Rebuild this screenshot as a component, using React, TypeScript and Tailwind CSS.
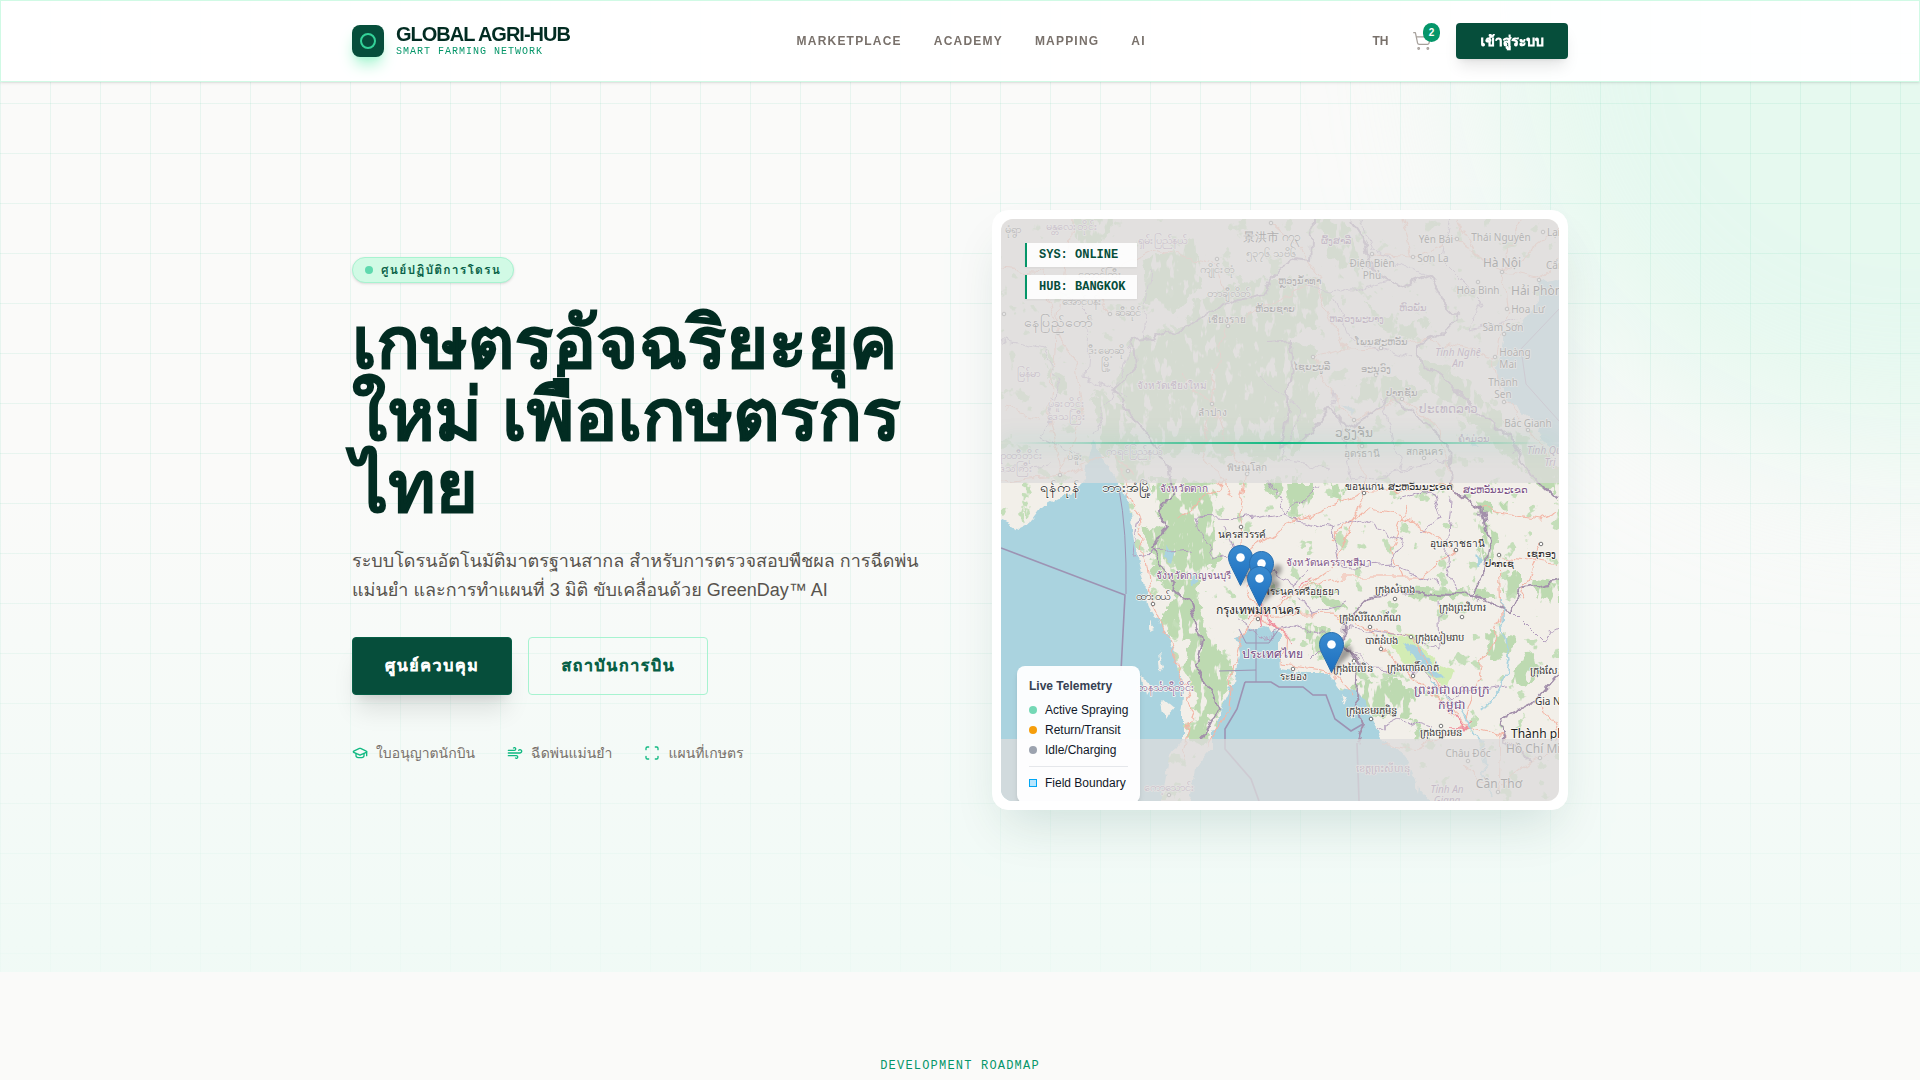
import { GraduationCap, Scan, ShoppingCart, Wind } from "lucide-react";

type Label = {
  x: number;
  y: number;
  t: string;
  kind?: "region" | "country" | "city" | "italic";
  start?: boolean;
};

const labels: Label[] = [
  { x: 12, y: 9, t: "မုံရွာ" },
  { x: 71, y: 6, t: "မန္တလေးတိုင်း", kind: "region" },
  { x: 162, y: 20, t: "ရှမ်းပြည်နယ်", kind: "region" },
  { x: 271, y: 17, t: "景洪市 ဂ၇၃", kind: "city" },
  { x: 270, y: 33, t: "၅၃၇၆ သဗိ၆" },
  { x: 216, y: 49, t: "ကျိုင်းတုံ" },
  { x: 228, y: 73, t: "တာချီလိတ်" },
  { x: 274, y: 89, t: "ຫ້ວຍຊາຍ" },
  { x: 226, y: 100, t: "เชียงราย" },
  { x: 57, y: 102, t: "နေပြည်တော်", kind: "city" },
  { x: 127, y: 92, t: "ဆီဆိုင်" },
  { x: 99, y: 54, t: "တောင်ကြီး" },
  { x: 81, y: 81, t: "အောင်ပန်း" },
  { x: 105, y: 130, t: "ဒီးမော့ဆို" },
  { x: 105, y: 143, t: "မြို့" },
  { x: 27, y: 153, t: "မြန်မာ", kind: "region" },
  { x: 171, y: 166, t: "จังหวัดเชียงใหม่", kind: "region" },
  { x: 65, y: 183, t: "ပဲခူးတိုင်း", kind: "region" },
  { x: 65, y: 196, t: "ဒေသကြီး", kind: "region" },
  { x: 211, y: 193, t: "ลำปาง" },
  { x: 133, y: 231, t: "ကရင်ပြည်နယ်", kind: "region" },
  { x: 15, y: 235, t: "ဧရာဝတီတိုင်း", kind: "region" },
  { x: 12, y: 248, t: "ဒေသကြီး", kind: "region" },
  { x: 74, y: 236, t: "ပဲခူး" },
  { x: 246, y: 248, t: "พิษณุโลก" },
  { x: 59, y: 267, t: "ရန်ကုန်", kind: "city" },
  { x: 126, y: 267, t: "ဘားအံမြို့", kind: "city" },
  { x: 183, y: 269, t: "จังหวัดตาก", kind: "region" },
  { x: 335, y: 21, t: "ຜົ້ງສາລີ", kind: "region" },
  { x: 435, y: 20, t: "Yên Bái" },
  { x: 500, y: 18, t: "Thái Nguyên" },
  { x: 546, y: 13, t: "Lạng", start: true },
  { x: 371, y: 44, t: "Điện Biên" },
  { x: 371, y: 56, t: "Phủ" },
  { x: 432, y: 39, t: "Sơn La" },
  { x: 501, y: 43, t: "Hà Nội", kind: "city" },
  { x: 545, y: 46, t: "Cẩm", start: true },
  { x: 477, y: 71, t: "Hòa Bình" },
  { x: 510, y: 71, t: "Hải Phòng", kind: "city", start: true },
  { x: 527, y: 90, t: "Hoa Lư" },
  { x: 502, y: 108, t: "Sầm Sơn" },
  { x: 514, y: 133, t: "Hoàng" },
  { x: 507, y: 145, t: "Mai" },
  { x: 457, y: 133, t: "Tỉnh Nghệ", kind: "italic" },
  { x: 457, y: 144, t: "An", kind: "italic" },
  { x: 502, y: 163, t: "Thành" },
  { x: 502, y: 175, t: "Sen" },
  { x: 527, y: 204, t: "Bắc Gianh" },
  { x: 526, y: 231, t: "Tỉnh Quảng", kind: "italic", start: true },
  { x: 549, y: 243, t: "Trị", kind: "italic" },
  { x: 298, y: 61, t: "ຫຼວງນ້ຳທາ" },
  { x: 355, y: 99, t: "ຫລວງພະບາງ", kind: "region" },
  { x: 412, y: 88, t: "ຫົວພັນ", kind: "region" },
  { x: 380, y: 122, t: "ໂພນສະຫວັນ" },
  { x: 311, y: 147, t: "ໄຊຍະບູລີ" },
  { x: 375, y: 149, t: "ອະນຸວົງ" },
  { x: 401, y: 173, t: "ປາກຊັນ" },
  { x: 447, y: 189, t: "ປະເທດລາວ", kind: "country" },
  { x: 353, y: 213, t: "ວຽງຈັນ", kind: "city" },
  { x: 473, y: 219, t: "ຄຳມ່ວນ", kind: "region" },
  { x: 361, y: 234, t: "อุดรธานี" },
  { x: 423, y: 232, t: "สกลนคร" },
  { x: 363, y: 267, t: "ขอนแก่น" },
  { x: 419, y: 267, t: "ສະຫວັນນະເຂດ" },
  { x: 494, y: 270, t: "ສະຫວັນນະເຂດ", kind: "region" },
  { x: 456, y: 324, t: "อุบลราชธานี" },
  { x: 540, y: 334, t: "ເຊກອງ" },
  { x: 498, y: 344, t: "ປາກເຊ" },
  { x: 328, y: 343, t: "จังหวัดนครราชสีมา", kind: "region" },
  { x: 300, y: 372, t: "พระนครศรีอยุธยา" },
  { x: 394, y: 370, t: "ក្រុងសំរោង" },
  { x: 461, y: 388, t: "ក្រុងព្រះវិហារ" },
  { x: 369, y: 398, t: "ក្រុងសិរីសោភ័ណ" },
  { x: 380, y: 421, t: "បាត់ដំបង" },
  { x: 438, y: 418, t: "ក្រុងសៀមរាប" },
  { x: 352, y: 449, t: "ក្រុងប៉ៃលិន" },
  { x: 412, y: 448, t: "ក្រុងពោធិ៍សាត់" },
  { x: 529, y: 451, t: "ក្រុងសែនមនោរម្យ", start: true },
  { x: 451, y: 470, t: "ព្រះរាជាណាចក្រ", kind: "country" },
  { x: 451, y: 485, t: "កម្ពុជា", kind: "country" },
  { x: 534, y: 482, t: "Gia Nghĩa", start: true },
  { x: 370, y: 491, t: "ក្រុងខេមរភូមិន្ទ" },
  { x: 510, y: 514, t: "Thành phố", kind: "city", start: true },
  { x: 505, y: 529, t: "Hồ Chí Minh", kind: "city", start: true },
  { x: 440, y: 513, t: "ក្រុងច្បារមន" },
  { x: 467, y: 534, t: "Châu Đốc" },
  { x: 382, y: 549, t: "ខេត្តព្រះសីហនុ", kind: "region" },
  { x: 498, y: 564, t: "Cần Thơ", kind: "city" },
  { x: 446, y: 570, t: "Tỉnh An", kind: "italic" },
  { x: 446, y: 581, t: "Giang", kind: "italic" },
  { x: 292, y: 457, t: "ระยอง" },
  { x: 241, y: 315, t: "นครสวรรค์" },
  { x: 192, y: 356, t: "จังหวัดกาญจนบุรี", kind: "region" },
  { x: 152, y: 376, t: "ထားဝယ်" },
  { x: 257, y: 390, t: "กรุงเทพมหานคร", kind: "city" },
  { x: 271, y: 434, t: "ประเทศไทย", kind: "country" },
  { x: 165, y: 467, t: "တနင်္သာရီတိုင်း", kind: "region" },
  { x: 168, y: 567, t: "ကော့သောင်း", kind: "region" },
];

const towns: [number, number][] = [
  [3, 95], [57, 114], [109, 95], [216, 40], [227, 107], [211, 185], [59, 256], [127, 252],
  [246, 255], [240, 308], [152, 385], [270, 4], [371, 35], [456, 20], [542, 13], [412, 38],
  [501, 53], [477, 63], [538, 61], [506, 90], [503, 115], [494, 138], [503, 183], [527, 211],
  [380, 129], [312, 138], [375, 156], [401, 180], [353, 201], [361, 227], [423, 239],
  [363, 274], [450, 267], [455, 331], [498, 336], [540, 325], [394, 380], [461, 398],
  [369, 408], [380, 430], [410, 418], [353, 442], [412, 457], [370, 500], [440, 507],
  [292, 450], [257, 400], [467, 542], [497, 573], [539, 539], [168, 576],
];

const pins: [number, number][] = [
  [227, 326],
  [248, 332],
  [246, 347],
  [318, 413],
];

const labelStyle = {
  town: "fill-[#333333] text-[10px]",
  region: "fill-[#7d5488] text-[10px]",
  country: "fill-[#724a82] text-[12px]",
  city: "fill-[#222222] text-[12px]",
  italic: "fill-[#7d5488] text-[10px] italic",
};

const burmeseStyle = {
  town: "fill-[#333333] text-[11px]",
  region: "fill-[#7d5488] text-[11px]",
  country: "fill-[#724a82] text-[14px]",
  city: "fill-[#222222] text-[14px]",
  italic: "fill-[#7d5488] text-[11px] italic",
};

const isBurmese = (t: string) => /^[\u1000-\u109f]/.test(t);

function RegionMap() {
  return (
    <svg
      viewBox="0 0 558 582"
      preserveAspectRatio="xMidYMid slice"
      className="block h-full w-full font-['Noto_Sans',sans-serif]"
      role="img"
      aria-label="Map of mainland Southeast Asia"
    >
      <defs>
        <filter id="coast" x="-5%" y="-5%" width="110%" height="110%">
          <feTurbulence type="fractalNoise" baseFrequency="0.09" numOctaves="3" seed="4" />
          <feDisplacementMap in="SourceGraphic" scale="9" xChannelSelector="R" yChannelSelector="G" />
        </filter>
        <filter id="forest" x="-5%" y="-5%" width="110%" height="110%">
          <feTurbulence type="fractalNoise" baseFrequency="0.07" numOctaves="3" seed="9" result="n" />
          <feDisplacementMap in="SourceGraphic" in2="n" scale="20" xChannelSelector="R" yChannelSelector="G" result="d" />
          <feTurbulence type="fractalNoise" baseFrequency="0.12 0.05" numOctaves="3" seed="2" />
          <feColorMatrix values="0 0 0 0 0  0 0 0 0 0  0 0 0 0 0  0 14 0 0 -4.9" result="holes" />
          <feComposite in="d" in2="holes" operator="in" />
        </filter>
        <filter id="specks" x="0" y="0" width="100%" height="100%">
          <feTurbulence type="fractalNoise" baseFrequency="0.06" numOctaves="4" seed="21" />
          <feColorMatrix values="0 0 0 0 0  0 0 0 0 0  0 0 0 0 0  0 20 0 0 -13.4" result="m" />
          <feComposite in="SourceGraphic" in2="m" operator="in" />
        </filter>
        <filter id="wiggle" x="-5%" y="-5%" width="110%" height="110%">
          <feTurbulence type="fractalNoise" baseFrequency="0.06" numOctaves="3" seed="12" />
          <feDisplacementMap in="SourceGraphic" scale="14" xChannelSelector="R" yChannelSelector="G" />
        </filter>
        <filter id="pinShadow" x="-30%" y="-30%" width="160%" height="160%">
          <feGaussianBlur stdDeviation="2" />
        </filter>
        <linearGradient id="pinFill" x1="0" y1="0" x2="0" y2="1">
          <stop offset="0" stopColor="#3a8bd0" />
          <stop offset="1" stopColor="#1c6fbf" />
        </linearGradient>
      </defs>

      <rect width="558" height="582" fill="#f2efe9" />
      <rect width="558" height="582" fill="#c4deb9" filter="url(#specks)" />

      <g fill="#bddab1" filter="url(#forest)">
        <path d="M142 41 196 18 199 74 176 91 145 85Z" />
        <path d="M196 85 240 60 269 61 312 58 332 78 309 111 285 118 318 130 312 214 290 240 166 236 132 200 112 171 132 121 176 112Z" />
        <path d="M312-10 349 8 356 41 339 58 326 30ZM70 0 110-5 105 22 78 26Z" />
        <path d="M42 128 66 165 62 180 48 165ZM92 168 122 190 140 240 150 270 125 262 100 230Z" />
        <path d="M412 134 469 164 529 224 558 250V280L520 250 470 205 430 165Z" />
        <path d="M360 158 400 160 430 176 400 186 350 182ZM360 84 400 105 430 100 415 120 380 112Z" />
        <path d="M152 260 212 262 214 318 218 341 196 368 200 392 212 421 230 441 228 466 214 498 204 526 188 518 194 481 184 448 188 421 164 414 164 386 175 375 152 361 154 331 134 304 166 310 152 288Z" />
        <path d="M286 262 312 262 305 295 290 296ZM327 262 350 266 340 282ZM262 262 280 262 278 285Z" />
        <path d="M480 302 494 306 496 326 482 346 480 320ZM402 368 484 372 490 380 404 378Z" />
        <path d="M500 354 520 352 520 372 504 374ZM530 362 558 366V384L534 378ZM486 412 512 416 508 440 488 436Z" />
        <path d="M350 464 390 460 420 474 412 500 378 498 358 484ZM310 365 345 385 356 392 330 394ZM306 406 330 408 326 440 312 438Z" />
        <path d="M474 282 508 284 506 292 480 290ZM524 434 545 450 522 466 512 456ZM410 500 425 510 415 520Z" />
      </g>
      <path
        d="M386 415 410 416 432 440 452 452 446 470 420 452 398 440Z"
        fill="#d3ecb4"
        filter="url(#coast)"
      />

      <g fill="#aad3df" filter="url(#coast)">
        <path d="M92 222 84 258 76 271 62 276 41 288 29 304 19 309-10 296V600H162L162 574 168 541 181 521 181 494 184 471 178 454 174 428 161 408 149 388 144 368 139 348 134 328 128 288 118 264 101 238Z" />
        <path d="M234 418 238 434 234 461 221 488 211 514 211 530 194 551 184 600H445L418 568 411 554 404 535 381 522 374 504 364 484 354 471 338 469 328 454 301 454 279 451 278 434 278 414 264 409 248 411Z" />
        <path d="M570 56 538 64 538 81 524 101 504 114 501 131 493 148 501 168 508 181 531 201 544 224 570 242Z" />
        <path d="M403 423 418 428 431 446 444 459 434 460 418 446Z" />
        <path d="M163 325 173 334 170 345 164 340ZM189 352 198 362 190 368ZM340 186 354 190 352 196ZM474 335 481 342 478 350ZM465 214 478 226 472 226Z" />
      </g>
      <g fill="#f2efe9" filter="url(#coast)">
        <path d="M10 290 16 310 10 306ZM22 286 28 304 24 306ZM158 430 163 450 160 455ZM149 400 153 410 149 412ZM140 455 150 465 144 475ZM160 480 172 490 165 500ZM340 474 346 480 344 486ZM412 556 420 560 418 575ZM350 490 354 496 351 500Z" />
      </g>

      <g fill="none" stroke="#f3b5a5" strokeWidth="1.1" filter="url(#wiggle)">
        <path d="M70 0 62 60 57 110 75 150 82 195 60 256 0 262M57 110 48 200 62 256 110 236 130 252M109 95 90 60 150 30 216 45 228 80M0 50 40 54 57 110M0 190 40 200" />
        <path d="M226 107 215 150 211 185 225 220 246 255 238 300 240 340 256 398M180 155 211 185 200 230 232 280M120 250 138 300 152 385 172 430 192 490 180 540M176 300 224 262" />
        <path d="M256 398 240 420 232 450 228 490 205 530M256 398 284 412 282 446 330 452 352 476M256 398 300 370 335 345 363 274 361 227 353 201" />
        <path d="M300 370 340 358 420 358 456 331 410 300 363 290 330 320M363 274 450 267 480 290 540 300 558 292M401 358 390 330 405 290M250 330 300 300 363 274" />
        <path d="M256 398 330 395 369 408 410 418 440 470 460 505 500 515M369 408 380 430 412 457 455 500M460 505 420 530 380 525M498 336 500 400 480 450 465 500M498 336 558 345M540 325 520 380" />
        <path d="M312 57 330 100 345 130 312 138 330 175 353 201 401 180 440 210 450 265M371 35 412 38 456 20 501 53 558 10M400 0 412 38M456 0 480 40 501 53 505 90 494 138 500 175 527 211 558 250M501 53 538 61 558 40M520 0 501 53M380 129 420 120 494 138M345 130 380 129M500 515 530 540 558 530M500 515 498 573 460 545M530 540 500 565M540 480 558 520M270 4 300 30 320 60 280 80 226 107" />
      </g>
      <g fill="none" stroke="#ef8c9c" strokeWidth="1.3" filter="url(#wiggle)">
        <path d="M245 400 258 392 278 408M258 385 262 410M270 404 284 414 288 425M280 378 310 360M452 498 462 510 470 500M448 508 470 508" />
      </g>
      <g fill="none" stroke="#b29dbd" strokeWidth="1" filter="url(#wiggle)">
        <path d="M0 120 40 130 60 160 42 220 75 235M60 70 90 100 85 160 130 178M132 121 110 180 92 215M150 50 140 120M280 60 340 75 390 60M260 160 300 190 280 240 330 250M332 78 350 120 412 140M330 170 350 260 410 250M380 180 400 250 450 240M360 0 370 30 430 60M450 0 440 40 480 80 470 110 520 100" />
        <path d="M194 298 240 300 290 292 320 265M194 298 212 341 235 335 226 310M137 300 132 335 190 330M264 260 290 300 330 310 340 350 390 345 400 320 360 300 330 310M390 345 440 365M400 280 430 270 440 300 420 310M450 280 445 345 455 370M240 360 262 350 290 365 310 350M290 365 310 395 345 385M235 400 260 420 300 405 330 420 310 440M344 408 400 415 438 430 436 380M344 425 370 450 420 452 450 480 480 470 508 466M380 510 400 500 430 510M510 390 540 420 558 410M0 250 50 246" />
      </g>
      <g fill="none" stroke="#a390ab" strokeWidth="2" filter="url(#wiggle)">
        <path d="M132 120 152 118 190 105 210 92 240 80 262 75 272 55 292 40 310 42 312 0M132 120 134 150 114 170 132 200 150 222 168 250 172 275 158 290 166 310 152 330 160 352 190 385 200 420 194 445 210 470 216 490 200 520" />
        <path d="M268 124 290 122 292 150 280 230 300 222 330 190 345 210 370 195 390 178 420 200 450 225 448 265 480 290 488 320 484 352 470 376 400 372 365 380 345 400 344 425 358 445 356 480 362 505 355 522" />
        <path d="M349 0 365 25 368 50 400 68 430 55 440 80 458 98 440 115 415 125 415 138 450 165 475 190 510 220 530 255 558 282M468 376 510 392 520 370 558 362M558 455 530 486 500 500 505 520 530 540" />
      </g>
      <g fill="none" stroke="#9d93b3" strokeWidth="1">
        <path d="M118 270Q126 310 125 375M218 452 255 451M255 410V463M238 410 245 424H268L278 410" />
        <path d="M558 90 520 130 525 165 558 202" />
        <path strokeWidth="1.6" d="M0 329 124 376 120 452M244 463H270L278 468H302L312 476 325 476 334 500 350 512 362 505M244 463 236 490 224 510 224 530 250 560 258 582M356 524 358 582" />
      </g>
      <path
        d="M500 380 502 410 508 440 500 468 480 490M430 462 460 492 480 525 490 582"
        fill="none"
        stroke="#aad3df"
        strokeWidth="1.6"
        filter="url(#wiggle)"
      />

      {towns.map(([x, y]) => (
        <circle key={`${x}-${y}`} cx={x} cy={y} r="1.8" fill="#fff" stroke="#666" strokeWidth="0.9" />
      ))}
      <g stroke="#fbf9f6" strokeWidth="1.6" strokeLinejoin="round" paintOrder="stroke">
        {labels.map((l) => (
          <text
            key={`${l.x}-${l.y}`}
            x={l.x}
            y={l.y}
            textAnchor={l.start ? "start" : "middle"}
            dominantBaseline="central"
            className={(isBurmese(l.t) ? burmeseStyle : labelStyle)[l.kind ?? "town"]}
          >
            {l.t}
          </text>
        ))}
      </g>

      <g fill="#dddbdc" fillOpacity="0.76">
        <rect width="558" height="264" />
        <rect y="520" width="558" height="62" />
      </g>

      {pins.map(([x, y]) => (
        <path
          key={`s${x}-${y}`}
          transform={`translate(${x} ${y})`}
          d="M12 41 20 20C26 10 36 12 32 22Z"
          fill="#000"
          fillOpacity="0.35"
          filter="url(#pinShadow)"
        />
      ))}
      {pins.map(([x, y]) => (
        <g key={`p${x}-${y}`} transform={`translate(${x} ${y})`}>
          <path
            d="M12.5.5C5.9.5.5 5.9.5 12.5c0 3.2 1.3 6.5 2.8 9.3L12.5 40.5l9.2-18.7c1.5-2.8 2.8-6.1 2.8-9.3C24.5 5.9 19.1.5 12.5.5Z"
            fill="url(#pinFill)"
            stroke="#2a6fae"
          />
          <circle cx="12.5" cy="12.5" r="4.3" fill="#fff" />
        </g>
      ))}
    </svg>
  );
}

function Header() {
  return (
    <header className="fixed inset-x-0 top-0 z-50 border border-emerald-100 bg-white/95 shadow-sm">
      <div className="mx-auto flex h-20 max-w-7xl items-center justify-between px-8">
        <a href="#" className="flex items-center gap-3">
          <span className="flex size-8 items-center justify-center rounded-lg bg-[#064e3b] shadow-lg shadow-emerald-200">
            <span className="size-4 rounded-full border-2 border-[#34d399]" />
          </span>
          <span className="flex flex-col">
            <span className="text-xl leading-5 font-bold tracking-tighter text-[#022c22]">GLOBAL AGRI-HUB</span>
            <span className="font-['Liberation_Mono',monospace] text-[10px] leading-[15px] tracking-widest text-[#059669]">
              SMART FARMING NETWORK
            </span>
          </span>
        </a>
        <nav className="flex gap-8 text-xs font-bold tracking-widest text-stone-500">
          <a href="#marketplace">MARKETPLACE</a>
          <a href="#academy">ACADEMY</a>
          <a href="#mapping">MAPPING</a>
          <a href="#ai">AI</a>
        </nav>
        <div className="flex items-center gap-6">
          <button type="button" className="text-xs font-bold text-stone-500">
            TH
          </button>
          <button type="button" aria-label="Cart" className="relative text-stone-400">
            <ShoppingCart size={20} strokeWidth={1.5} />
            <span className="absolute -top-2 -right-2 rounded-full bg-[#059669] px-1.5 py-0.5 text-[10px] leading-[15px] font-bold text-white">
              2
            </span>
          </button>
          <button
            type="button"
            className="h-9 rounded bg-[#064e3b] px-6 text-sm text-white shadow-lg [-webkit-text-stroke:1px_currentColor]"
          >
            เข้าสู่ระบบ
          </button>
        </div>
      </div>
    </header>
  );
}

function Telemetry() {
  const rows = [
    { name: "Active Spraying", dot: "bg-[#74d8b5]" },
    { name: "Return/Transit", dot: "bg-[#f59e0b]" },
    { name: "Idle/Charging", dot: "bg-[#9ca3af]" },
  ];
  return (
    <div className="absolute -bottom-0.5 left-4 rounded-lg bg-white/95 p-3 text-xs text-gray-900 shadow-md">
      <h2 className="mb-2 font-bold text-gray-700">Live Telemetry</h2>
      <ul className="flex flex-col gap-1">
        {rows.map((r) => (
          <li key={r.name} className="flex items-center gap-2">
            <span className={`size-2 rounded-full ${r.dot}`} />
            {r.name}
          </li>
        ))}
      </ul>
      <div className="mt-2 flex items-center gap-2 border-t border-gray-200 pt-2">
        <span className="size-2 border border-sky-500 bg-sky-200" />
        Field Boundary
      </div>
    </div>
  );
}

function Hero() {
  const tags = ["SYS: ONLINE", "HUB: BANGKOK"];
  const features = [
    { Icon: GraduationCap, text: "ใบอนุญาตนักบิน" },
    { Icon: Wind, text: "ฉีดพ่นแม่นยำ" },
    { Icon: Scan, text: "แผนที่เกษตร" },
  ];
  return (
    <section className="relative flex min-h-[90vh] items-center overflow-hidden pt-12">
      <div className="absolute -top-[400px] -right-[420px] size-[860px] rounded-full bg-[#d1f8e5]/50 blur-[80px]" />
      <div className="absolute inset-0 bg-[linear-gradient(to_right,#10b98114_1px,transparent_1px),linear-gradient(to_bottom,#10b98114_1px,transparent_1px)] bg-[size:50px_50px] bg-[position:0_3px]" />
      <div className="absolute inset-x-0 bottom-0 h-1/2 bg-linear-to-t from-[#eefaf5]/80 to-transparent" />

      <div className="relative mx-auto grid w-full max-w-7xl grid-cols-2 items-center gap-16 px-8">
        <div className="flex flex-col items-start">
          <p className="mb-6 flex items-center gap-2 rounded-full border border-[#a7f3d0] bg-[#d1fae5] px-3 py-1 text-xs font-bold tracking-widest text-[#065f46] shadow-sm">
            <span className="size-2 rounded-full bg-[#5fd9ae]" />
            ศูนย์ปฏิบัติการโดรน
          </p>
          <h1 className="mb-6 text-7xl leading-none font-normal text-[#022c22] [-webkit-text-stroke:3px_currentColor]">
            เกษตรอัจฉริยะยุคใหม่ เพื่อเกษตรกรไทย
          </h1>
          <p className="mb-8 text-lg leading-[29px] text-stone-600">
            ระบบโดรนอัตโนมัติมาตรฐานสากล สำหรับการตรวจสอบพืชผล การฉีดพ่นแม่นยำ และการทำแผนที่ 3 มิติ
            ขับเคลื่อนด้วย GreenDay™ AI
          </p>
          <div className="mb-12 flex gap-4">
            <button
              type="button"
              className="rounded border border-[#065f46] bg-[#064e3b] px-8 py-4 text-base tracking-widest text-white shadow-xl [-webkit-text-stroke:1px_currentColor]"
            >
              ศูนย์ควบคุม
            </button>
            <button
              type="button"
              className="rounded border border-[#a7f3d0] px-8 py-4 text-base tracking-widest text-[#065f46] [-webkit-text-stroke:1px_currentColor]"
            >
              สถาบันการบิน
            </button>
          </div>
          <ul className="flex gap-8 text-sm text-stone-500">
            {features.map(({ Icon, text }) => (
              <li key={text} className="flex items-center gap-2">
                <Icon size={16} className="text-[#10b981]" />
                {text}
              </li>
            ))}
          </ul>
        </div>

        <div className="h-[600px] rounded-2xl border border-white bg-white p-2 shadow-2xl shadow-emerald-900/15">
          <div className="relative h-full overflow-hidden rounded-xl">
            <RegionMap />
            <div className="absolute inset-x-0 top-[223px] h-0.5 bg-linear-to-r from-transparent via-[#10b981] to-transparent shadow-[0_0_20px_rgba(16,185,129,0.5)]" />
            <div className="absolute top-6 left-6 flex flex-col gap-2 font-['Liberation_Mono',monospace] text-xs font-bold text-[#064e3b]">
              {tags.map((t) => (
                <span key={t} className="border-l-2 border-[#059669] bg-white/90 px-3 py-1 shadow-xs">
                  {t}
                </span>
              ))}
            </div>
            <Telemetry />
          </div>
        </div>
      </div>
    </section>
  );
}

export default function App() {
  return (
    <div lang="th" className="min-h-screen bg-stone-50 font-['Liberation_Sans',Loma,sans-serif]">
      <Header />
      <main>
        <Hero />
        <section className="px-8 pt-20 pb-1 text-center">
          <h2 className="font-['Liberation_Mono',monospace] text-xs leading-7 tracking-widest text-[#059669]">
            DEVELOPMENT ROADMAP
          </h2>
        </section>
      </main>
    </div>
  );
}
